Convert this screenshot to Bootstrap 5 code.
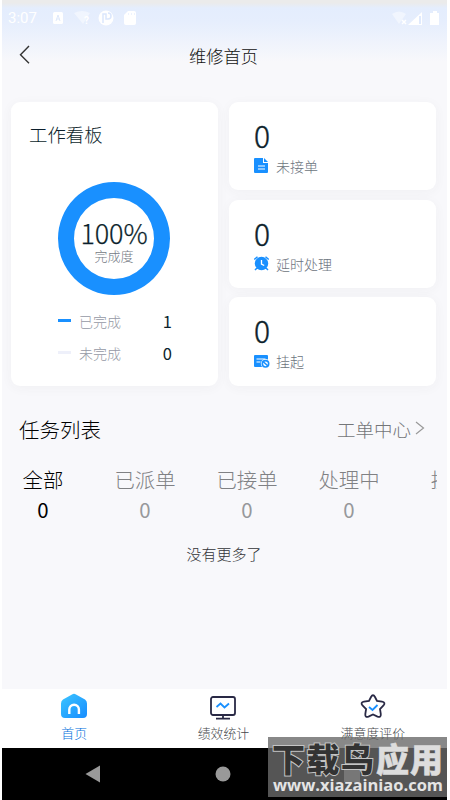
<!DOCTYPE html>
<html lang="zh-CN">
<head>
<meta charset="utf-8">
<meta name="viewport" content="width=device-width, initial-scale=1">
<title>维修首页</title>
<link href="https://cdn.jsdelivr.net/npm/bootstrap@5.3.0/dist/css/bootstrap.min.css" rel="stylesheet">
<style>
body{font-family:"Noto Sans CJK SC",sans-serif;font-weight:300;background:#fff;color:#0c1f2c;overflow:hidden}
svg{display:block;flex:none}
.phone{width:445px;height:800px;margin-left:2px;background:linear-gradient(#ebebeb 0,#ebebeb 3px,#e4edfd 8px,#e6eefd 22px,#f8f8fb 62px)}
.statusbar{height:36px;padding:0 7px 0 6px;font:15px/36px Roboto,sans-serif;color:#fff}
.topbar{height:66px;padding:0 16px}
.topbar h1{font-size:17.3px;line-height:39px;font-weight:300;color:#111}
.board{height:285px;padding:0 11px 0 9px}
.panel{background:#fff;border-radius:9px;box-shadow:0 2px 12px rgba(60,60,70,.045)}
.work{width:207px}
.work h2{font-size:18.4px;line-height:28px;padding:18px 0 0 18px;font-weight:300}
.ring{width:112px;height:113px;margin:34px auto 0 47px;border:16px solid #1990ff;border-radius:50%;padding-top:7px}
.pct{font-size:27px;line-height:28px;letter-spacing:-.1px;-webkit-text-stroke:.25px}
.lbl{font-size:13px;line-height:18px;color:#747a84}
.legend{font-size:14px;line-height:32px;color:#9599a5;padding:0 46px 0 47px}
.legend b{font-weight:400;font-size:16.5px;color:#0c1f2c}
.legends{padding-top:10px}
.dash{width:13px;height:3px;background:#1990ff;margin-right:8px}
.dash-off{background:#eef0fa}
.stat{width:207px;height:88.5px;padding:15px 0 0 25px}
.stat .num{font-size:30px;line-height:37px;font-weight:300;-webkit-text-stroke:.4px}
.stat .cap{font-size:14px;line-height:20px;color:#6d7480;margin-top:2px;gap:7px}
.tasks{height:60px;margin-top:14px;padding:0 22px 0 17px}
.tasks h2{font-size:20.5px;line-height:58px;font-weight:300;color:#000}
.more{font-size:18.5px;line-height:56px;color:#747679;height:59px}
.tabs{margin:4px 10px 0 -10px;height:66px;overflow:hidden;font-size:20.4px;line-height:30px;color:#808184}
.tabs>div{width:102px;flex:none}
.tabs b{font-weight:400}
.tabs .on{color:#000}
.tabs>div:not(.on) b{color:#97989b}
.empty{font-size:15px;line-height:24px;color:#333438;height:160px;padding:12px 1px 0 0}
.bottomnav{height:59px;background:#fff;font-size:12.9px;line-height:19px;color:#45474b}
.bottomnav .on{color:#0070dd;padding-right:4px}
.bottomnav>div{padding-top:3px;width:33.333%}
.bottomnav .mid{padding-right:2px}
.sys{height:52px;background:#000}
.stamp{position:absolute;left:268px;top:737px}
</style>
</head>
<body>
<main class="phone d-flex flex-column">
 <div class="statusbar d-flex align-items-center">
  <span>3:07</span>
  <svg class="ms-3" width="85" height="16" viewBox="0 0 85 16"><g fill="#fff"><rect x="0" y="2" width="10" height="12" rx="1.5"/><path d="M21 3q8-4 16 0l-7 11z" opacity=".45"/><circle cx="53" cy="8" r="7.500"/><path d="M75 1h6q2 0 2 2v10q0 2-2 2h-8q-2 0-2-2V5z"/></g><path d="M3 11l2-6 2 6M3.500 9h3" fill="none" stroke="#dfe9fb"/><path d="M50 13V4h3v5h2q3 0 3-3t-3-3" fill="none" stroke="#dbe7fd" stroke-width="1.500"/><path d="M75 4h1M78 4h1M81 4h1" stroke="#dbe7fd"/><text x="31" y="14" font-size="10" font-weight="700" fill="#fff">?</text></svg>
  <svg class="ms-auto" width="48" height="16" viewBox="0 0 48 16" fill="#fff"><path d="M0 4q7-5 14 0l-7 10z" opacity=".45"/><path d="M10 10l4 4m0-4l-4 4" stroke="#fff" stroke-width="1.500"/><path d="M16 15L30 2v13z"/><path d="M28 6v8" stroke="#e0eafd" stroke-width="2"/><path d="M38 3h3V1h4v2h2v12h-9z"/></svg>
 </div>
 <header class="topbar d-flex">
  <svg width="14" height="38" viewBox="0 0 14 38"><path d="M11 10L2.500 18.700l8.500 8.500" fill="none" stroke="#333" stroke-width="1.400"/></svg>
  <h1 class="mb-0 flex-fill text-center">维修首页</h1>
  <span class="pe-3"></span>
 </header>

 <section class="board d-flex justify-content-between">
  <div class="panel work">
   <h2 class="mb-0">工作看板</h2>
   <div class="ring d-flex flex-column align-items-center justify-content-center">
    <div class="pct">100%</div><div class="lbl">完成度</div>
   </div>
   <div class="legends">
    <div class="legend d-flex align-items-center"><span class="dash"></span>已完成<b class="ms-auto">1</b></div>
    <div class="legend d-flex align-items-center"><span class="dash dash-off"></span>未完成<b class="ms-auto">0</b></div>
   </div>
  </div>
  <div class="d-flex flex-column justify-content-between">
   <div class="panel stat"><div class="num">0</div><div class="cap d-flex align-items-center">
    <svg width="15" height="15" viewBox="0 0 15 15"><path d="M1 0h8v5h5v9q0 1-1 1H1q-1 0-1-1V1q0-1 1-1z" fill="#1990ff"/><path d="M10 0l4 4h-4z" fill="#1990ff"/><path d="M4 8h7M4 11h7" stroke="#fff" stroke-width="1.200"/></svg>未接单</div></div>
   <div class="panel stat"><div class="num">0</div><div class="cap d-flex align-items-center">
    <svg width="15" height="15" viewBox="0 0 15 15"><path d="M.3 3.500L3.500.8M14.700 3.500L11.500.8M3 12l-2 2M12 12l2 2" stroke="#1990ff" stroke-width="1.500"/><circle cx="7.500" cy="7.500" r="6.700" fill="#1990ff"/><path d="M7.500 4v4l2.700 1.500" fill="none" stroke="#fff" stroke-width="1.300"/></svg>延时处理</div></div>
   <div class="panel stat"><div class="num">0</div><div class="cap d-flex align-items-center">
    <svg width="15" height="15" viewBox="0 0 15 15" overflow="visible"><rect y="1" width="14" height="12" rx="1" fill="#1990ff"/><path d="M2.500 5h9M2.500 8h4" stroke="#fff" stroke-width="1.200"/><circle cx="11.500" cy="9.800" r="4.700" fill="#fff"/><circle cx="11.500" cy="9.800" r="3.200" fill="none" stroke="#1990ff" stroke-width="1.600"/><path d="M9 7.500l5 4.500" stroke="#1990ff" stroke-width="1.600"/></svg>挂起</div></div>
  </div>
 </section>

 <section class="tasks d-flex justify-content-between">
  <h2 class="mb-0">任务列表</h2>
  <div class="more d-flex align-items-center">工单中心<svg class="ms-1" width="10" height="16" viewBox="0 0 10 16"><path d="M1 1l7.500 6L1 13" fill="none" stroke="#999" stroke-width="1.200"/></svg></div>
 </section>
 <section class="tabs d-flex text-center">
  <div class="on">全部<br><b>0</b></div><div>已派单<br><b>0</b></div><div>已接单<br><b>0</b></div><div>处理中<br><b>0</b></div><div>挂起</div>
 </section>
 <div class="empty text-center">没有更多了</div>

 <nav class="bottomnav d-flex text-center mt-auto">
  <div class="on d-flex flex-column align-items-center">
   <svg width="28" height="31" viewBox="0 0 28 31"><defs><linearGradient id="g" x1="0" y1="0" x2="1" y2="1"><stop stop-color="#3dc6ff"/><stop offset="1" stop-color="#178cff"/></linearGradient></defs><path d="M12 2.500q2-1.500 4 0l9 5q2 1.300 2 4V22q0 4-4 4H5q-4 0-4-4V11.500q0-2.700 2-4z" fill="url(#g)"/><path d="M9.300 22V17.500a4.800 4.800 0 0 1 9.600 0V22" fill="none" stroke="#fff" stroke-width="2.400"/></svg>首页</div>
  <div class="mid d-flex flex-column align-items-center">
   <svg width="28" height="31" viewBox="0 0 28 31"><rect x="2" y="5" width="24" height="18" rx="2" fill="none" stroke="#292945" stroke-width="1.800"/><path d="M14 23v3M7 26.600h14" stroke="#292945" stroke-width="1.800"/><path d="M7.500 15l4-3.500 4 4 4.500-4" fill="none" stroke="#1990ff" stroke-width="1.800"/></svg>绩效统计</div>
  <div class="d-flex flex-column align-items-center">
   <svg width="28" height="31" viewBox="0 0 28 31"><path d="M12 5q2-3.500 4 0l2 4 5 .7q4 .8 1.500 3.800l-3.500 3.500.8 5q.3 4-3.300 2.600L14 22.500l-4.500 2.100Q6 26 6.300 22l.8-5L3.500 13.500Q1 10.500 5 9.700l5-.7z" fill="none" stroke="#292945" stroke-width="1.800"/><path d="M10 15l3.500 3 5-5" fill="none" stroke="#1990ff" stroke-width="1.800"/></svg>满意度评价</div>
 </nav>
 <div class="sys"><svg width="445" height="52" viewBox="0 0 445 52" fill="#999"><path d="M83.500 26L98 17.500v17z"/><circle cx="221" cy="26" r="7.500"/><rect x="342" y="18" width="16" height="15"/></svg></div>
</main>
<svg class="stamp" width="179" height="60" viewBox="0 0 179 60"><rect width="179" height="60" fill="#6a6a6a" opacity=".8"/><rect x="76" y="30" width="16" height="15" fill="#777"/>
 <g font-family="Noto Sans CJK SC, sans-serif" font-weight="900" font-size="33"><text x="4" y="35" textLength="102" fill="#333" stroke="#c4c4c4" stroke-width="2" paint-order="stroke">下载鸟</text><text x="108" y="35" textLength="67" fill="#ddd" stroke="#ddd" stroke-width=".6">应用</text></g>
 <text x="5" y="54" font-family="Open Sans, sans-serif" font-weight="700" font-size="16" textLength="170" lengthAdjust="spacingAndGlyphs" fill="#e4e4e4">www.xiazainiao.com</text></svg>
<script src="https://cdn.jsdelivr.net/npm/bootstrap@5.3.0/dist/js/bootstrap.bundle.min.js"></script>
</body>
</html>
